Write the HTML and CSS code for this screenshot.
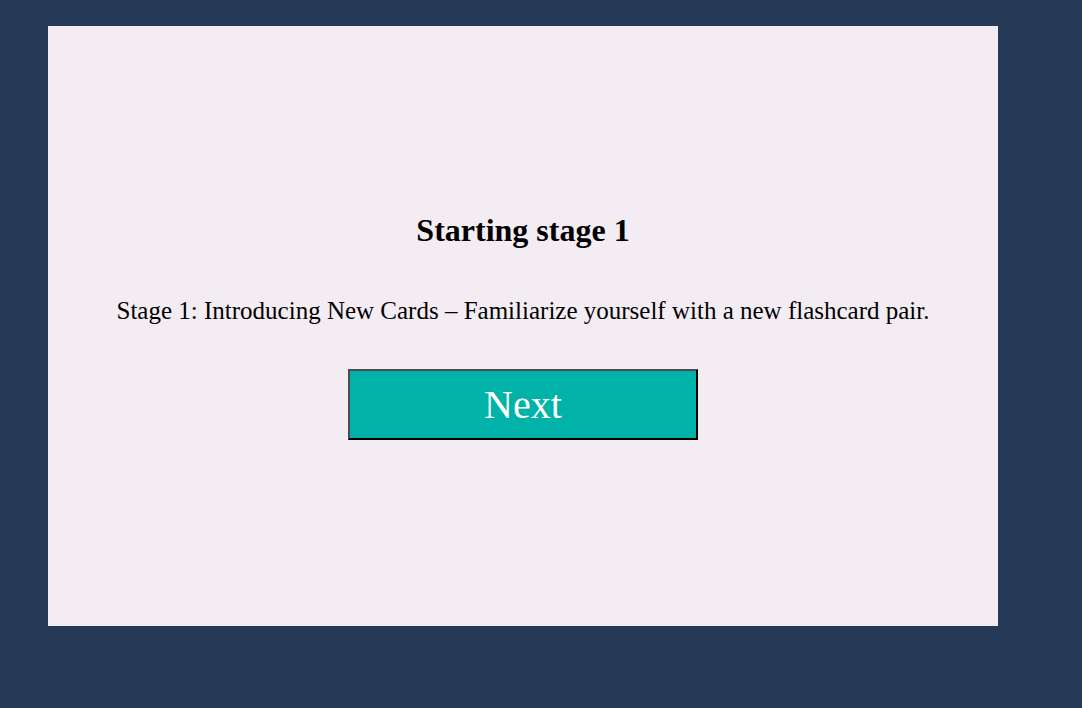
FILE: index.html
```html
<!DOCTYPE html>
<html>
<head>
<meta charset="utf-8">
<link rel="stylesheet" href="styles.css">
</head>
<body>
<main class="panel">
  <h2 class="title">Starting stage 1</h2>
  <p class="desc">Stage 1: Introducing New Cards – Familiarize yourself with a new flashcard pair.</p>
  <button class="next">Next</button>
</main>
</body>
</html>
```
FILE: styles.css
```css
html, body {
  margin: 0;
  height: 100%;
}
body {
  background: #243a57;
  padding: 26px 0 0 48px;
  box-sizing: border-box;
  font-family: "Liberation Serif", "Times New Roman", serif;
}
.panel {
  width: 950px;
  height: 600px;
  background: #f4ecf3;
  display: flex;
  flex-direction: column;
  align-items: center;
  justify-content: center;
  color: #000;
}
.title {
  font-size: 32px;
  font-weight: bold;
  margin: 0 0 48px;
  line-height: 36px;
}
.desc {
  font-size: 25px;
  margin: 0 0 44px;
  line-height: 29px;
}
.next {
  width: 350px;
  height: 71px;
  background: #00b2a8;
  color: #fff;
  font-family: "Liberation Serif", "Times New Roman", serif;
  font-size: 40px;
  border: 2px solid;
  border-color: #4f4a4f #000 #000 #4f4a4f;
  padding: 0;
  cursor: pointer;
}
```
